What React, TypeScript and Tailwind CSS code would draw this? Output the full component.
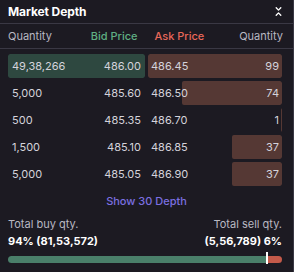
import { ChevronsDownUp } from "lucide-react";

const bids = [
  { qty: 4938266, label: "49,38,266", price: "486.00" },
  { qty: 5000, label: "5,000", price: "485.60" },
  { qty: 500, label: "500", price: "485.35" },
  { qty: 1500, label: "1,500", price: "485.10" },
  { qty: 5000, label: "5,000", price: "485.05" },
];

const asks = [
  { qty: 99, label: "99", price: "486.45" },
  { qty: 74, label: "74", price: "486.50" },
  { qty: 1, label: "1", price: "486.70" },
  { qty: 37, label: "37", price: "486.85" },
  { qty: 37, label: "37", price: "486.90" },
];

const maxBid = Math.max(...bids.map((b) => b.qty));
const maxAsk = Math.max(...asks.map((a) => a.qty));

export default function App() {
  return (
    <div
      className="w-[294px] h-[272px] bg-[#1c1a22] text-[#d4d3db] overflow-hidden border-r border-[#3a3844]"
      style={{ fontFamily: "Inter, 'Liberation Sans', sans-serif" }}
    >
      {/* header */}
      <div className="flex h-[24px] items-center justify-between pl-[8px] pr-[9px] border-b border-[#3a3844]">
        <span className="text-[12px] font-bold text-white tracking-[-0.1px]">Market Depth</span>
        <ChevronsDownUp className="h-[11px] w-[11px] text-white" strokeWidth={3} />
      </div>

      {/* column headers */}
      <div className="flex h-[25px] items-center pl-[8px] pr-[10px] text-[11px] border-b border-[#3a3844]">
        <span className="flex-1 text-[#b9b8c2]">Quantity</span>
        <span className="w-[86px] text-right pr-[8px] text-[#5fae82] font-medium">Bid Price</span>
        <span className="w-[86px] pl-[9px] text-[#e8685a] font-medium">Ask Price</span>
        <span className="flex-1 text-right text-[#b9b8c2]">Quantity</span>
      </div>

      {/* rows */}
      <div className="flex flex-col gap-[3px] pt-[5px] pl-[8px] pr-[11px] text-[11px]">
        {bids.map((b, i) => {
          const a = asks[i];
          return (
            <div key={i} className="flex gap-[3px] h-[24px]">
              <div className="relative w-[137px] flex items-center justify-between px-[4px] rounded-[2px] overflow-hidden">
                <div
                  className="absolute right-0 top-0 bottom-0 bg-[#2e4840] rounded-[2px]"
                  style={{ width: `${(b.qty / maxBid) * 100}%` }}
                />
                <span className="relative">{b.label}</span>
                <span className="relative">{b.price}</span>
              </div>
              <div className="relative flex-1 flex items-center justify-between px-[3px] rounded-[2px] overflow-hidden">
                <div
                  className="absolute right-0 top-0 bottom-0 bg-[#553834] rounded-[2px]"
                  style={{ width: `${(a.qty / maxAsk) * 100}%` }}
                />
                <span className="relative">{a.price}</span>
                <span className="relative">{a.label}</span>
              </div>
            </div>
          );
        })}
      </div>

      {/* show more */}
      <div className="flex justify-center pt-[7px] text-[11px] font-medium text-[#7b6fe0]">
        Show 30 Depth
      </div>

      {/* totals */}
      <div className="pl-[8px] pr-[11px] pt-[6px] text-[11px]">
        <div className="flex justify-between text-[#b9b8c2]">
          <span>Total buy qty.</span>
          <span>Total sell qty.</span>
        </div>
        <div className="flex justify-between font-bold text-white mt-[1px]">
          <span>94% (81,53,572)</span>
          <span>(5,56,789) 6%</span>
        </div>
        <div className="relative mt-[6px] flex h-[7px] rounded-full">
          <div className="h-full w-[94%] bg-[#4a7f6a] rounded-l-full" />
          <div className="h-full flex-1 bg-[#c45a4a] rounded-r-full" />
          <div className="absolute left-[94%] top-[-4px] h-[12px] w-[2px] bg-white" />
        </div>
      </div>
    </div>
  );
}
